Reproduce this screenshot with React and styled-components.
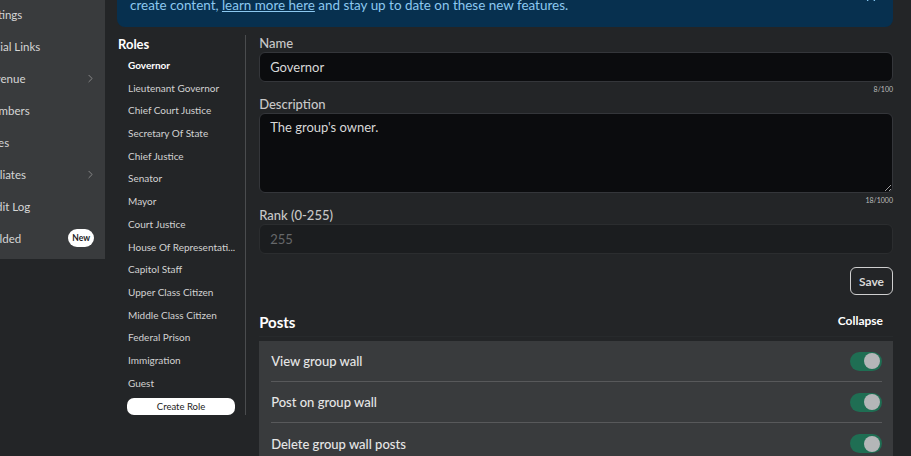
import React from "react";
import styled, { createGlobalStyle } from "styled-components";
import { ChevronRight, X } from "lucide-react";

const Global = createGlobalStyle`
  html, body { margin: 0; padding: 0; background: #232527; }
  body { font-family: Lato, "Open Sans", sans-serif; }
  * { box-sizing: border-box; }
`;

const Page = styled.div`
  display: flex;
  width: 911px;
  height: 456px;
  overflow: hidden;
  background: #232527;
`;

const Sidebar = styled.nav`
  flex: 0 0 135px;
  margin-left: -30px;
  margin-top: -2px;
  align-self: flex-start;
  background: #393b3d;
  padding: 0 7px 5px 12px;
  display: flex;
  flex-direction: column;
`;

const NavItem = styled.div`
  height: 32px;
  display: flex;
  align-items: center;
  justify-content: space-between;
  font-size: 11.5px;
  color: #d6d6d6;
  white-space: nowrap;
  svg { color: #9c9c9c; margin-right: 1px; }
`;

const NewPill = styled.span`
  background: #ffffff;
  color: #1b1b1b;
  font-size: 8.5px;
  font-weight: 700;
  height: 18px;
  padding: 0 4px;
  border-radius: 9px;
  display: inline-flex;
  align-items: center;
  margin-right: 4px;
`;

const Main = styled.main`
  flex: 1;
  display: flex;
  flex-direction: column;
  padding: 0 18px 0 12px;
  min-width: 0;
`;

const Banner = styled.div`
  margin-top: -4px;
  background: #07304f;
  border-radius: 0 0 8px 8px;
  padding: 0 15px 13px 13px;
  display: flex;
  align-items: flex-start;
  justify-content: space-between;
`;

const BannerText = styled.p`
  margin: 0;
  font-size: 13.45px;
  line-height: 18px;
  color: #8cc8f0;
  a { color: #8cc8f0; text-decoration: underline; }
`;

const Close = styled.span`
  margin-top: -6px;
  color: #7fbfe9;
  display: flex;
`;

const Content = styled.div`
  display: flex;
  padding-top: 8px;
`;

const RolesCol = styled.aside`
  flex: 0 0 129px;
  align-self: flex-start;
  border-right: 1px solid #4a4c4e;
  display: flex;
  flex-direction: column;
  padding-right: 10px;
`;

const RolesTitle = styled.h2`
  margin: 0 0 0 1px;
  height: 19px;
  line-height: 18px;
  font-size: 13px;
  font-weight: 700;
  color: #ffffff;
`;

const RoleItem = styled.div`
  height: 22.7px;
  line-height: 22.7px;
  padding-left: 11px;
  font-size: 10px;
  font-weight: ${(p) => (p.$active ? 700 : 400)};
  color: ${(p) => (p.$active ? "#ffffff" : "#d2d2d2")};
  white-space: nowrap;
  overflow: hidden;
  text-overflow: ellipsis;
`;

const CreateRole = styled.button`
  margin: 4px 0 0 10px;
  height: 17px;
  width: 108px;
  border: none;
  border-radius: 7px;
  background: #ffffff;
  color: #222;
  font-family: inherit;
  font-size: 9.5px;
  padding: 0;
`;

const Form = styled.section`
  flex: 1;
  padding-left: 13px;
  display: flex;
  flex-direction: column;
  min-width: 0;
`;

const Label = styled.label`
  height: 17px;
  line-height: 16px;
  font-size: 13px;
  font-weight: 500;
  color: #c8c8c8;
`;

const fieldBase = `
  width: 100%;
  border-radius: 6px;
  font-family: Lato, "Open Sans", sans-serif;
  font-size: 13px;
  padding: 0 10px;
  outline: none;
`;

const TextInput = styled.input`
  ${fieldBase}
  height: 30px;
  background: ${(p) => (p.disabled ? "#1b1d1f" : "#0b0c0e")};
  border: 1px solid ${(p) => (p.disabled ? "#2b2d2f" : "#34363a")};
  color: #d8d8d8;
  &::placeholder { color: #66686a; }
`;

const TextArea = styled.textarea`
  ${fieldBase}
  height: 80px;
  padding-top: 5px;
  background: #0b0c0e;
  border: 1px solid #34363a;
  color: #d8d8d8;
  resize: vertical;
  display: block;
`;

const Counter = styled.div`
  height: 14px;
  line-height: 14px;
  text-align: right;
  font-size: 7px;
  color: #bdbdbd;
`;

const SaveRow = styled.div`
  display: flex;
  justify-content: flex-end;
  margin-top: 13px;
`;

const SaveButton = styled.button`
  height: 28px;
  padding: 0 8px;
  border: 1px solid #cfcfcf;
  border-radius: 6px;
  background: transparent;
  color: #d8d8d8;
  font-family: inherit;
  font-weight: 700;
  font-size: 12px;
`;

const SectionHeader = styled.div`
  display: flex;
  align-items: center;
  justify-content: space-between;
  height: 32px;
  margin-top: 10px;
  padding-right: 10px;
  border-bottom: 1px solid #272a2c;
`;

const SectionTitle = styled.h3`
  margin: 0;
  font-size: 15px;
  font-weight: 700;
  color: #ffffff;
  margin-top: 3px;
`;

const Collapse = styled.span`
  font-size: 12px;
  font-weight: 700;
  color: #ffffff;
`;

const Panel = styled.div`
  margin-top: 4px;
  background: #393b3d;
  padding: 0 11px 0 12px;
`;

const PermRow = styled.div`
  height: 41px;
  display: flex;
  align-items: center;
  justify-content: space-between;
  border-bottom: 1px solid #58595b;
  font-size: 13px;
  font-weight: 500;
  color: #e6e6e6;
  &:last-child { border-bottom: none; }
`;

const Toggle = styled.span`
  width: 32px;
  height: 19px;
  border-radius: 10px;
  background: #1f6e53;
  display: flex;
  align-items: center;
  justify-content: flex-end;
  padding-right: 2px;
  &::after {
    content: "";
    width: 16px;
    height: 16px;
    border-radius: 50%;
    background: #b4b6b8;
  }
`;

const navItems = [
  { label: "Settings" },
  { label: "Social Links" },
  { label: "Revenue", chevron: true },
  { label: "Members" },
  { label: "Roles" },
  { label: "Affiliates", chevron: true },
  { label: "Audit Log" },
  { label: "Guilded", badge: true },
];

const roles = [
  "Governor",
  "Lieutenant Governor",
  "Chief Court Justice",
  "Secretary Of State",
  "Chief Justice",
  "Senator",
  "Mayor",
  "Court Justice",
  "House Of Representatives",
  "Capitol Staff",
  "Upper Class Citizen",
  "Middle Class Citizen",
  "Federal Prison",
  "Immigration",
  "Guest",
];

const perms = ["View group wall", "Post on group wall", "Delete group wall posts"];

export default function App() {
  return (
    <>
      <Global />
      <Page>
        <Sidebar>
          {navItems.map((n) => (
            <NavItem key={n.label}>
              <span>{n.label}</span>
              {n.chevron && <ChevronRight size={13} strokeWidth={1.4} />}
              {n.badge && <NewPill>New</NewPill>}
            </NavItem>
          ))}
        </Sidebar>
        <Main>
          <Banner>
            <BannerText>
              create content, <a>learn more here</a> and stay up to date on these new features.
            </BannerText>
            <Close>
              <X size={14} strokeWidth={2} />
            </Close>
          </Banner>
          <Content>
            <RolesCol>
              <RolesTitle>Roles</RolesTitle>
              {roles.map((r, i) => (
                <RoleItem key={r} $active={i === 0}>
                  {r.length > 22 ? r.slice(0, 21) + "..." : r}
                </RoleItem>
              ))}
              <CreateRole>Create Role</CreateRole>
            </RolesCol>
            <Form>
              <Label>Name</Label>
              <TextInput readOnly value="Governor" />
              <Counter>8/100</Counter>
              <Label>Description</Label>
              <TextArea readOnly value="The group's owner." />
              <Counter>18/1000</Counter>
              <Label>Rank (0-255)</Label>
              <TextInput disabled placeholder="255" />
              <SaveRow>
                <SaveButton>Save</SaveButton>
              </SaveRow>
              <SectionHeader>
                <SectionTitle>Posts</SectionTitle>
                <Collapse>Collapse</Collapse>
              </SectionHeader>
              <Panel>
                {perms.map((p) => (
                  <PermRow key={p}>
                    <span>{p}</span>
                    <Toggle />
                  </PermRow>
                ))}
              </Panel>
            </Form>
          </Content>
        </Main>
      </Page>
    </>
  );
}
